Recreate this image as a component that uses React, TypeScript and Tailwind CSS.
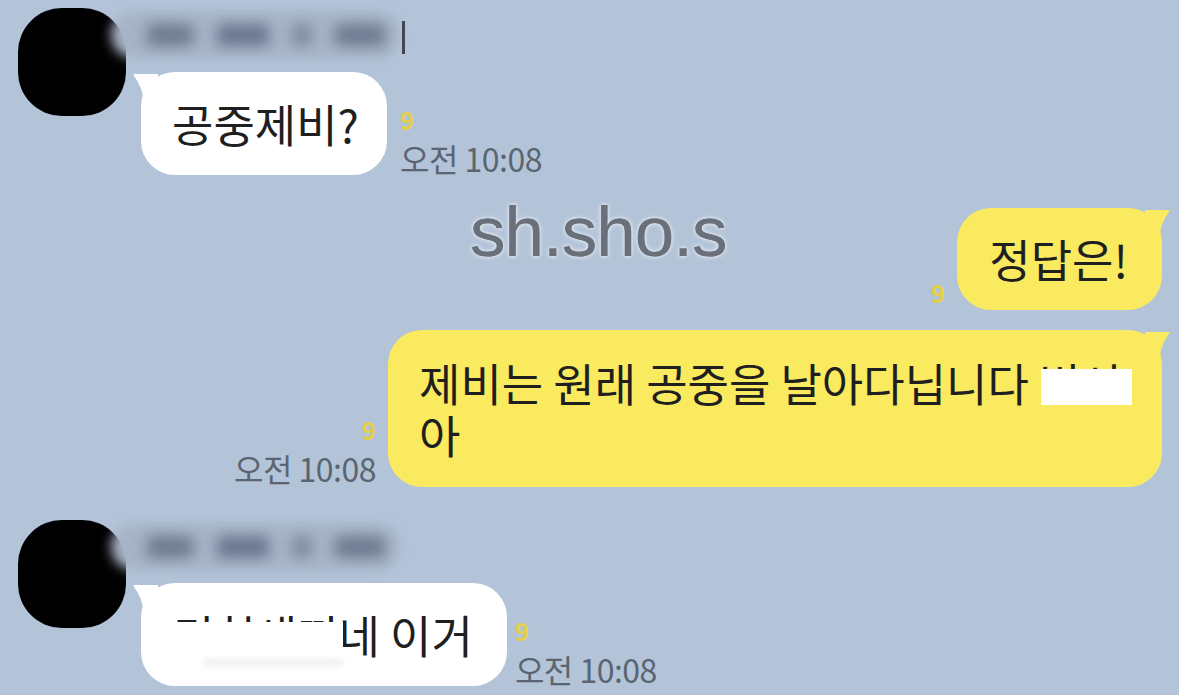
import type { ReactNode } from 'react';

const KR = "font-['Noto_Sans_CJK_KR','Noto_Sans',sans-serif]";

// blurred-out nickname above the friend's bubble
function BlurName({ bar }: { bar?: boolean }) {
  return (
    <div className="relative ml-[-30px] mt-[4px] flex h-[46px] w-[288px] items-center">
      <div className="absolute inset-0 rounded-full bg-[#a6b3c6] blur-[6px]" />
      <div className="relative flex w-full items-center gap-[24px] pl-[36px] blur-[7px]">
        <div className="h-[22px] w-[46px] rounded bg-[#6f7a8d]" />
        <div className="h-[22px] w-[52px] rounded bg-[#6a7690]" />
        <div className="h-[22px] w-[18px] rounded bg-[#7c889b]" />
        <div className="h-[22px] w-[50px] rounded bg-[#6e7a90]" />
      </div>
      {bar && <div className="absolute right-[-6px] top-[9px] h-[33px] w-[3px] bg-[#414853]" />}
    </div>
  );
}

function Avatar() {
  return <div className="h-[108px] w-[108px] shrink-0 rounded-[44px] bg-black" />;
}

function TailLeft({ color }: { color: string }) {
  return (
    <svg className="absolute left-[-9px] top-[2px]" width="26" height="28" viewBox="0 0 26 28">
      <path d="M26 0 L2 0 Q1 0 2 2 Q10 12 12 28 L26 28 Z" fill={color} />
    </svg>
  );
}

function TailRight({ color }: { color: string }) {
  return (
    <svg className="absolute right-[-9px] top-[2px]" width="26" height="28" viewBox="0 0 26 28">
      <path d="M0 0 L24 0 Q25 0 24 2 Q16 12 14 28 L0 28 Z" fill={color} />
    </svg>
  );
}

function Unread({ className = '' }: { className?: string }) {
  return <span className={`text-[24px] font-bold leading-none text-[#e6cf45] ${className}`}>9</span>;
}

function Meta({ right }: { right?: boolean }) {
  return (
    <div className={`flex flex-col ${right ? 'items-end' : 'items-start'} leading-none`}>
      <Unread />
      <span className="mt-[10px] text-[32px] tracking-[-0.5px] text-[#5b6571]">오전 10:08</span>
    </div>
  );
}

function Bubble({ children, yellow, className }: { children: ReactNode; yellow?: boolean; className: string }) {
  const color = yellow ? '#f9ea5f' : '#ffffff';
  return (
    <div className={`relative rounded-[34px] ${yellow ? 'bg-[#f9ea5f]' : 'bg-white'} ${className}`}>
      {yellow ? <TailRight color={color} /> : <TailLeft color={color} />}
      <div className="relative text-[45px] leading-[52px] text-[#1f1f1f]">{children}</div>
    </div>
  );
}

export default function App() {
  return (
    <div className={`relative h-[695px] w-[1179px] overflow-hidden bg-[#b3c4d9] ${KR}`}>
      {/* friend: 공중제비? */}
      <div className="flex pl-[18px] pt-[8px]">
        <Avatar />
        <div className="ml-[15px] flex flex-col">
          <div className="h-[64px]">
            <BlurName bar />
          </div>
          <div className="flex items-end">
            <Bubble className="flex h-[103px] items-center pl-[31px] pr-[28px]">공중제비?</Bubble>
            <div className="mb-[1px] ml-[13px]">
              <Meta />
            </div>
          </div>
        </div>
      </div>

      {/* me */}
      <div className="mt-[33px] flex flex-col items-end pr-[17px]">
        <div className="flex items-end">
          <Unread className="mb-[5px] mr-[12px]" />
          <Bubble yellow className="flex h-[102px] items-center pl-[32px] pr-[34px]">정답은!</Bubble>
        </div>
        <div className="mt-[20px] flex items-end">
          <div className="mb-[3px] mr-[12px]">
            <Meta right />
          </div>
          <Bubble yellow className="h-[157px] w-[774px] pl-[31px] pt-[27px]">
            제비는 원래 공중을 날아다닙니다{' '}
            <span className="relative">
              변시
              <span className="absolute left-[2px] right-[-10px] top-[19px] h-[36px] bg-white" />
            </span>
            <br />아
          </Bubble>
        </div>
      </div>

      {/* friend: 미친새끼네 이거 */}
      <div className="mt-[33px] flex pl-[18px]">
        <Avatar />
        <div className="ml-[15px] flex flex-col">
          <div className="h-[63px]">
            <BlurName />
          </div>
          <div className="flex items-end">
            <Bubble className="flex h-[103px] items-center pl-[32px] pr-[34px]">
              <span className="relative">
                미친새끼
                <span className="absolute inset-x-[-4px] bottom-[-4px] top-[20px] bg-white" />
                <span className="absolute bottom-[2px] left-[30px] h-[5px] w-[140px] rounded-full bg-[#e6e8ec] blur-[3px]" />
              </span>
              네 이거
            </Bubble>
            <div className="mb-[1px] ml-[8px]">
              <Meta />
            </div>
          </div>
        </div>
      </div>

      {/* watermark */}
      <div className="absolute left-[470px] top-[179px] font-['Liberation_Sans',Arial,sans-serif] text-[71px] tracking-[-1px] text-[#6a7079] [text-shadow:0_0_1px_#6a7079,0_0_2px_#eef2f7,0_0_3px_#eef2f7,0_0_5px_#e6ecf3]">
        sh.sho.s
      </div>
    </div>
  );
}
